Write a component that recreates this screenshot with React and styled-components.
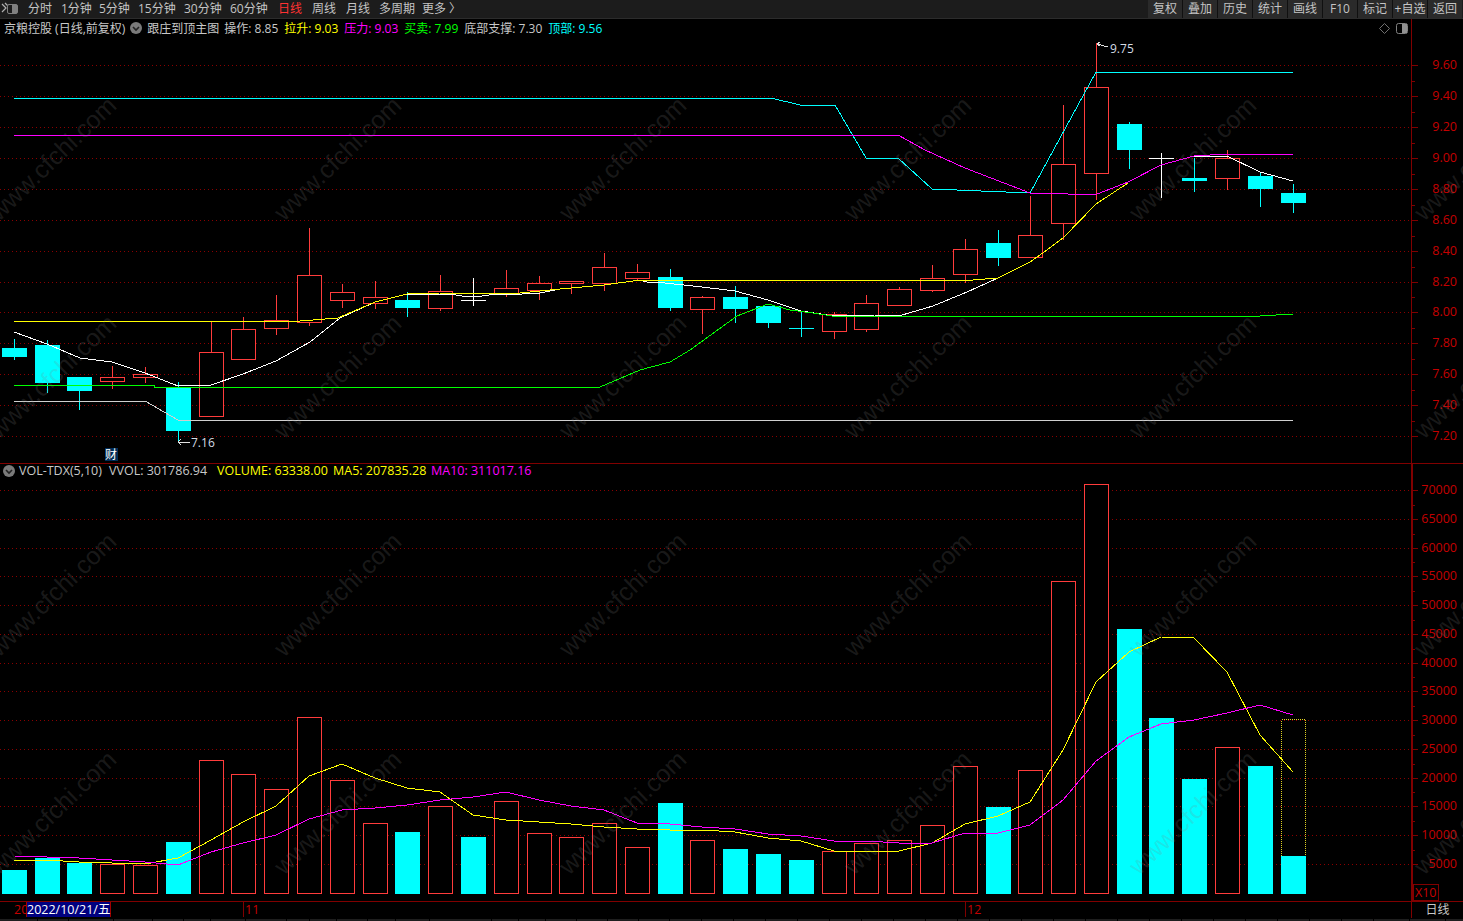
import React from "react";
import styled, { createGlobalStyle } from "styled-components";

const RED = "#ff3c3c";
const CYAN = "#00ffff";
const GRID = "#8a0000";
const AXIS = "#800000";
const LABEL = "#c40000";

const GlobalStyle = createGlobalStyle`
  html, body {
    margin: 0;
    padding: 0;
    background: #000;
  }
`;

const Page = styled.div`
  position: relative;
  width: 1463px;
  height: 921px;
  overflow: hidden;
  display: flex;
  flex-direction: column;
  background: #000;
  color: #c8c8c8;
  font-family: "Open Sans", "Noto Sans CJK SC", sans-serif;
  font-size: 12px;
`;

const Toolbar = styled.div`
  display: flex;
  align-items: center;
  height: 18px;
  background: #1c1c1c;
  border-bottom: 1px solid #2c2c2c;
  padding-left: 1px;
`;

const Logo = styled.svg`
  width: 18px;
  height: 14px;
  margin-right: 9px;
`;

const Periods = styled.div`
  display: flex;
`;

const Period = styled.span`
  width: ${({ $width }) => $width}px;
  color: ${({ $active }) => ($active ? "#ff3232" : "#c4c4c4")};
  line-height: 18px;
  white-space: nowrap;
`;

const Actions = styled.div`
  display: flex;
  gap: 1px;
  margin-left: auto;
  margin-right: 1px;
  background: #101010;
`;

const Action = styled.div`
  width: 34px;
  height: 18px;
  line-height: 18px;
  text-align: center;
  background: #2a2a2a;
  color: #c4c4c4;
  white-space: nowrap;
`;

const PricePane = styled.div`
  display: flex;
  height: 444px;
  border-bottom: 1px solid ${AXIS};
`;

const VolumePane = styled.div`
  display: flex;
  height: 437px;
`;

const PlotColumn = styled.div`
  width: 1411px;
  display: flex;
  flex-direction: column;
`;

const Legend = styled.div`
  display: flex;
  align-items: center;
  height: ${({ $height }) => $height}px;
  padding-left: ${({ $indent }) => $indent}px;
  font-size: ${({ $size }) => $size}px;
  white-space: nowrap;
`;

const LegendText = styled.span`
  color: ${({ $color }) => $color || "#c8c8c8"};
  width: ${({ $width }) => ($width ? `${$width}px` : "auto")};
  flex: none;
`;

const ChevronIcon = styled.svg`
  width: 12px;
  height: 12px;
  flex: none;
  margin: 0 ${({ $right }) => $right}px 0 ${({ $left }) => $left}px;
`;

const PaneTools = styled.div`
  display: flex;
  align-items: center;
  gap: 6px;
  margin: 1px 3px 0 auto;
`;

const Plot = styled.svg`
  display: block;
  flex: none;
`;

const DateRow = styled.div`
  display: flex;
  height: 16px;
  border-top: 1px solid ${AXIS};
`;

const DateAxis = styled.div`
  position: relative;
  width: 1411px;
`;

const DateTag = styled.div`
  position: absolute;
  left: 26px;
  top: 0;
  width: 83px;
  height: 15px;
  line-height: 15px;
  font-size: 12.5px;
  background: #000080;
  border-left: 1px solid #a00000;
  border-right: 1px solid #a00000;
  color: #fff;
  white-space: nowrap;
`;

const PeriodName = styled.div`
  width: 51px;
  border-left: 1px solid ${AXIS};
  text-align: center;
  color: #c8c8c8;
  line-height: 16px;
`;

const StatusStrip = styled.div`
  display: flex;
  gap: 1px;
  height: 3px;
  margin-top: 1px;
`;

const StatusCell = styled.div`
  background: #1e1e1e;
  flex: ${({ $width }) => ($width ? `0 0 ${$width}px` : "1")};
`;

const Watermarks = styled.div`
  position: absolute;
  left: -90px;
  top: 49px;
  display: grid;
  grid-template-columns: repeat(6, 285px);
  grid-auto-rows: 218px;
  place-items: center;
  pointer-events: none;
`;

const Watermark = styled.span`
  font-family: "Liberation Sans", sans-serif;
  font-size: 25px;
  color: rgba(128, 128, 128, 0.2);
  transform: rotate(-44deg);
  white-space: nowrap;
`;

const Note = styled.text`
  fill: ${({ $color }) => $color || "#d4dce4"};
  font-size: 12px;
  font-family: "Open Sans", "Noto Sans CJK SC", sans-serif;
`;

const AxisLabel = styled.text`
  fill: ${LABEL};
  font-size: 12.5px;
  font-family: "Open Sans", sans-serif;
`;

// cx, up (red) / down (cyan) / white doji, bodyTop, bodyBottom, wickTop, wickBottom
const candles = [
  [14, "d", 348, 357, 339, 360],
  [47, "d", 345, 383, 340, 393],
  [79, "d", 377, 391, 377, 410],
  [112, "u", 377, 381, 366, 389],
  [145, "u", 374, 377, 367, 383],
  [178, "d", 387, 431, 382, 443],
  [211, "u", 352, 416, 322, 416],
  [243, "u", 329, 359, 317, 359],
  [276, "u", 320, 328, 295, 335],
  [309, "u", 275, 322, 228, 326],
  [342, "u", 292, 300, 284, 308],
  [375, "u", 297, 303, 281, 309],
  [407, "d", 300, 308, 292, 317],
  [440, "u", 291, 308, 275, 311],
  [473, "w", 300, 300, 278, 306],
  [506, "u", 288, 293, 270, 297],
  [539, "u", 283, 290, 276, 300],
  [571, "u", 281, 283, 281, 294],
  [604, "u", 267, 283, 253, 291],
  [637, "u", 272, 278, 264, 281],
  [670, "d", 277, 308, 269, 311],
  [702, "u", 297, 309, 296, 334],
  [735, "d", 297, 309, 286, 323],
  [768, "d", 306, 323, 306, 328],
  [801, "c", 328, 328, 312, 337],
  [834, "u", 314, 331, 312, 339],
  [866, "u", 303, 329, 295, 332],
  [899, "u", 289, 305, 287, 305],
  [932, "u", 278, 290, 265, 292],
  [965, "u", 249, 274, 239, 283],
  [998, "d", 243, 258, 230, 266],
  [1030, "u", 235, 257, 196, 257],
  [1063, "u", 164, 223, 105, 240],
  [1096, "u", 87, 173, 43, 200],
  [1129, "d", 124, 150, 122, 169],
  [1161, "w", 158, 158, 153, 198],
  [1194, "d", 178, 181, 158, 192],
  [1227, "u", 158, 178, 150, 190],
  [1260, "d", 176, 189, 173, 207],
  [1293, "d", 193, 203, 184, 213]
];

// top of each volume bar, bars all stand on y=893
const volumes = [
  870, 858, 863, 864, 865, 842, 760, 774, 789, 717, 780, 823, 832, 806, 837,
  801, 833, 837, 823, 847, 803, 840, 849, 854, 860, 851, 843, 840, 825, 766,
  807, 770, 581, 484, 629, 718, 779, 747, 766, 856
];
const upBars = new Set([
  3, 4, 6, 7, 8, 9, 10, 11, 13, 15, 16, 17, 18, 19, 21, 25, 26, 27, 28, 29, 31,
  32, 33, 37
]);

const priceLines = [
  {
    color: "#d0d0d0",
    points: "14,401 145,401 178,420 1293,420"
  },
  {
    color: CYAN,
    points:
      "14,98 771,98 800,105 835,105 866,158 898,158 932,189 1030,193 1096,72 1293,72"
  },
  {
    color: "#ffffff",
    points:
      "14,332 47,344 80,358 112,362 145,373 178,386 211,385 243,374 276,361 310,342 340,318 375,302 407,294 446,294 456,295 468,297 482,296 497,294 522,294 540,293 560,289 604,285 640,280 647,282 665,283 702,287 735,291 768,300 801,311 834,316 875,315 902,315 933,306 967,292 998,278"
  },
  {
    color: "#ffffff",
    points: "1194,156 1227,156 1260,172 1293,181"
  },
  {
    color: "#00ff00",
    points:
      "14,385 154,385 154,387 600,387 640,370 670,362 690,350 737,316 768,304 790,310 813,313 832,316 1260,316 1293,314"
  },
  {
    color: "#ffff00",
    points:
      "14,321 300,321 338,318 375,302 407,294 440,293 520,293 560,289 604,285 640,280 973,280 998,278 1030,262 1047,250 1063,238 1096,204 1128,183"
  },
  {
    color: "#ff00ff",
    points:
      "14,135 898,135 925,150 965,168 1030,193 1040,193.5 1096,194.5 1128,182 1161,165 1194,156 1227,154 1293,154"
  }
];

const volumeLines = [
  {
    color: "#ffff00",
    points:
      "14,860 47,860 79,862 112,863 145,864 178,858 211,840 243,822 276,806 309,776 342,764 375,778 407,788 440,792 473,815 506,820 539,822 571,824 604,827 637,829 670,830 702,830 735,832 768,838 801,841 834,851 866,851 899,851 932,843 965,824 998,816 1030,802 1063,750 1096,682 1129,652 1161,637 1194,638 1227,672 1260,735 1293,772"
  },
  {
    color: "#ff00ff",
    points:
      "14,856 47,857 79,858 112,860 145,862 178,865 211,852 243,843 276,835 309,819 342,810 375,808 407,805 440,800 473,797 506,792 539,800 571,806 604,810 637,823 670,824 702,827 735,829 768,834 801,836 834,841 866,841 899,843 932,843 965,833 998,833 1030,825 1063,800 1096,761 1129,737 1161,724 1194,720 1227,713 1260,705 1293,715"
  }
];

const priceTicks = [
  ["9.60", 65], ["9.40", 96], ["9.20", 127], ["9.00", 158], ["8.80", 189],
  ["8.60", 220], ["8.40", 251], ["8.20", 282], ["8.00", 312], ["7.80", 343],
  ["7.60", 374], ["7.40", 405], ["7.20", 436]
];

const volumeTicks = [
  70000, 65000, 60000, 55000, 50000, 45000, 40000, 35000, 30000, 25000, 20000,
  15000, 10000, 5000
].map((v) => [String(v), Math.round(864 - ((v - 5000) / 5000) * 28.77)]);

// name and the width of its slot in the toolbar
const periods = [
  ["分时", 33], ["1分钟", 38], ["5分钟", 39], ["15分钟", 46], ["30分钟", 46],
  ["60分钟", 48], ["日线", 34], ["周线", 34], ["月线", 33], ["多周期", 43],
  ["更多 〉", 40]
];
const actions = ["复权", "叠加", "历史", "统计", "画线", "F10", "标记", "+自选", "返回"];
const stripCells = [
  37, 30, 44, 38, 30, 26, 34, 40, 22, 26, 30, 27, 33, 61, 26, 26, 30, 30, 30,
  30, 31, 31, 31, 31, 31, 31, 31, 31, 31, 31, 31, 31, 31, 31, 31, 31, 31, 31,
  31, 31, 31, 31, 35, 35, 35, 24
];

const Chevron = ({ left, right }) => (
  <ChevronIcon $left={left} $right={right} viewBox="0 0 12 12">
    <circle cx="6" cy="6" r="6" fill="#7a7a7a" />
    <path d="M3 5 L6 8 L9 5" fill="none" stroke="#222" strokeWidth="1.6" />
  </ChevronIcon>
);

const Candle = ({ cx, kind, top, bottom, wickTop, wickBottom }) => {
  const wick = cx + 0.5;
  if (kind === "w" || kind === "c") {
    const color = kind === "w" ? "#ffffff" : CYAN;
    return (
      <g stroke={color}>
        <line x1={wick} x2={wick} y1={wickTop} y2={wickBottom} />
        <line x1={cx - 12} x2={cx + 13} y1={top + 0.5} y2={top + 0.5} />
      </g>
    );
  }
  if (kind === "d") {
    return (
      <g>
        <line x1={wick} x2={wick} y1={wickTop} y2={wickBottom} stroke={CYAN} />
        <rect x={cx - 12} y={top} width={25} height={bottom - top} fill={CYAN} />
      </g>
    );
  }
  return (
    <g stroke={RED}>
      <line x1={wick} x2={wick} y1={wickTop} y2={top} />
      <line x1={wick} x2={wick} y1={bottom} y2={wickBottom} />
      <rect
        x={cx - 11.5}
        y={top + 0.5}
        width={24}
        height={bottom - top}
        fill="#000"
      />
    </g>
  );
};

const GridLines = ({ ticks }) =>
  ticks.map(([label, y]) => (
    <line
      key={label}
      x1={0}
      x2={1411}
      y1={y + 0.5}
      y2={y + 0.5}
      stroke={GRID}
      strokeDasharray="1 3"
    />
  ));

const Lines = ({ lines }) =>
  lines.map(({ color, points }) => (
    <polyline key={color + points.length} points={points} fill="none" stroke={color} />
  ));

const Axis = ({ ticks, top, height, thick, children }) => (
  <Plot
    width={52}
    height={height}
    viewBox={`1411 ${top} 52 ${height}`}
    shapeRendering="crispEdges"
  >
    <line
      x1={1411.5}
      x2={1411.5}
      y1={top}
      y2={top + height}
      stroke={AXIS}
      strokeWidth={thick ? 2 : 1}
    />
    {ticks.map(([label, y], i) => (
      <g key={label}>
        <line x1={1412} x2={1418} y1={y + 0.5} y2={y + 0.5} stroke={AXIS} />
        {i < ticks.length - 1 && (
          <line
            x1={1412}
            x2={1415}
            y1={Math.round((y + ticks[i + 1][1]) / 2) + 0.5}
            y2={Math.round((y + ticks[i + 1][1]) / 2) + 0.5}
            stroke={AXIS}
          />
        )}
        <AxisLabel x={1457} y={y + 4} textAnchor="end" shapeRendering="auto">
          {label}
        </AxisLabel>
      </g>
    ))}
    {children}
  </Plot>
);

const App = () => (
  <Page>
    <GlobalStyle />
    <Toolbar>
      <Logo viewBox="0 0 18 14">
        <path d="M1 2 L5 6 L1 10 M4 1 L8 5" fill="none" stroke="#b0b0b0" strokeWidth="1.2" />
        <rect x="6.5" y="2.5" width="10" height="9" rx="1.5" fill="#1c1c1c" stroke="#808080" />
        <rect x="11" y="3" width="5" height="8" fill="#808080" />
      </Logo>
      <Periods>
        {periods.map(([name, width]) => (
          <Period key={name} $width={width} $active={name === "日线"}>
            {name}
          </Period>
        ))}
      </Periods>
      <Actions>
        {actions.map((name) => (
          <Action key={name}>{name}</Action>
        ))}
      </Actions>
    </Toolbar>

    <PricePane>
      <PlotColumn>
        <Legend $height={18} $indent={4} $size={12}>
          <LegendText>京粮控股 (日线,前复权)</LegendText>
          <Chevron left={5} right={5} />
          <LegendText $width={77}>跟庄到顶主图</LegendText>
          <LegendText $width={60}>操作: 8.85</LegendText>
          <LegendText $width={60} $color="#ffff00">拉升: 9.03</LegendText>
          <LegendText $width={60} $color="#ff00ff">压力: 9.03</LegendText>
          <LegendText $width={60} $color="#00ff00">买卖: 7.99</LegendText>
          <LegendText $width={84}>底部支撑: 7.30</LegendText>
          <LegendText $color={CYAN}>顶部: 9.56</LegendText>
          <PaneTools>
            <svg width="11" height="11" viewBox="0 0 11 11">
              <path d="M5.5 0.5 L10.5 5.5 L5.5 10.5 L0.5 5.5 Z" fill="none" stroke="#707070" />
            </svg>
            <svg width="12" height="11" viewBox="0 0 12 11">
              <rect x="0.5" y="0.5" width="11" height="10" rx="2" fill="none" stroke="#808080" />
              <rect x="6" y="1" width="5" height="9" fill="#909090" />
            </svg>
          </PaneTools>
        </Legend>
        <Plot
          width={1411}
          height={426}
          viewBox="0 37 1411 426"
          shapeRendering="crispEdges"
        >
          <GridLines ticks={priceTicks} />
          {candles.map(([cx, kind, top, bottom, wickTop, wickBottom]) => (
            <Candle
              key={cx}
              cx={cx}
              kind={kind}
              top={top}
              bottom={bottom}
              wickTop={wickTop}
              wickBottom={wickBottom}
            />
          ))}
          <Lines lines={priceLines} />
          <polyline points="1100,42 1097,44 1100,46" fill="none" stroke="#e0e0e0" />
          <line x1={1097} y1={44} x2={1108} y2={47} stroke="#e0e0e0" />
          <Note x={1110} y={53} shapeRendering="auto">9.75</Note>
          <polyline points="181,439 178,442 181,445" fill="none" stroke="#e0e0e0" />
          <line x1={178} y1={442} x2={190} y2={442} stroke="#e0e0e0" />
          <Note x={191} y={447} shapeRendering="auto">7.16</Note>
          <rect x={105} y={448} width={13} height={13} fill="#002c58" />
          <Note x={105} y={459} $color="#ffffff" shapeRendering="auto">财</Note>
        </Plot>
      </PlotColumn>
      <Axis ticks={priceTicks} top={19} height={444} />
    </PricePane>

    <VolumePane>
      <PlotColumn>
        <Legend $height={13} $indent={0} $size={12.5}>
          <Chevron left={3} right={4} />
          <LegendText $width={90}>VOL-TDX(5,10)</LegendText>
          <LegendText $width={108}>VVOL: 301786.94</LegendText>
          <LegendText $width={116} $color="#ffff00">VOLUME: 63338.00</LegendText>
          <LegendText $width={98} $color="#ffff00">MA5: 207835.28</LegendText>
          <LegendText $color="#ff00ff">MA10: 311017.16</LegendText>
        </Legend>
        <Plot
          width={1411}
          height={424}
          viewBox="0 477 1411 424"
          shapeRendering="crispEdges"
        >
          <GridLines ticks={volumeTicks} />
          {volumes.map((top, i) => {
            const cx = candles[i][0];
            return upBars.has(i) ? (
              <rect
                key={cx}
                x={cx - 11.5}
                y={top + 0.5}
                width={24}
                height={893 - top}
                fill="#000"
                stroke={RED}
              />
            ) : (
              <rect key={cx} x={cx - 12} y={top} width={25} height={894 - top} fill={CYAN} />
            );
          })}
          <rect
            x={1281.5}
            y={719.5}
            width={24}
            height={174}
            fill="none"
            stroke="#e0d020"
            strokeDasharray="1 1"
          />
          <rect x={1281} y={856} width={25} height={38} fill={CYAN} />
          <Lines lines={volumeLines} />
        </Plot>
      </PlotColumn>
      <Axis ticks={volumeTicks} top={464} height={437} thick>
        <rect x={1413.5} y={884.5} width={25} height={16} fill="none" stroke={AXIS} />
        <AxisLabel x={1415} y={897} shapeRendering="auto">X10</AxisLabel>
      </Axis>
    </VolumePane>

    <DateRow>
      <DateAxis>
        <Plot width={1411} height={16} viewBox="0 902 1411 16" shapeRendering="crispEdges">
          <line x1={243.5} x2={243.5} y1={902} y2={917} stroke={AXIS} />
          <line x1={965.5} x2={965.5} y1={902} y2={917} stroke={AXIS} />
          <AxisLabel x={14} y={914} shapeRendering="auto">20</AxisLabel>
          <AxisLabel x={245} y={914} shapeRendering="auto">11</AxisLabel>
          <AxisLabel x={967} y={914} shapeRendering="auto">12</AxisLabel>
        </Plot>
        <DateTag>2022/10/21/五</DateTag>
      </DateAxis>
      <PeriodName>日线</PeriodName>
    </DateRow>

    <StatusStrip>
      {stripCells.map((width, i) => (
        <StatusCell key={i} $width={width} />
      ))}
      <StatusCell />
    </StatusStrip>

    <Watermarks>
      {Array.from({ length: 24 }, (_, i) => (
        <Watermark key={i}>www.cfchi.com</Watermark>
      ))}
    </Watermarks>
  </Page>
);

export default App;
